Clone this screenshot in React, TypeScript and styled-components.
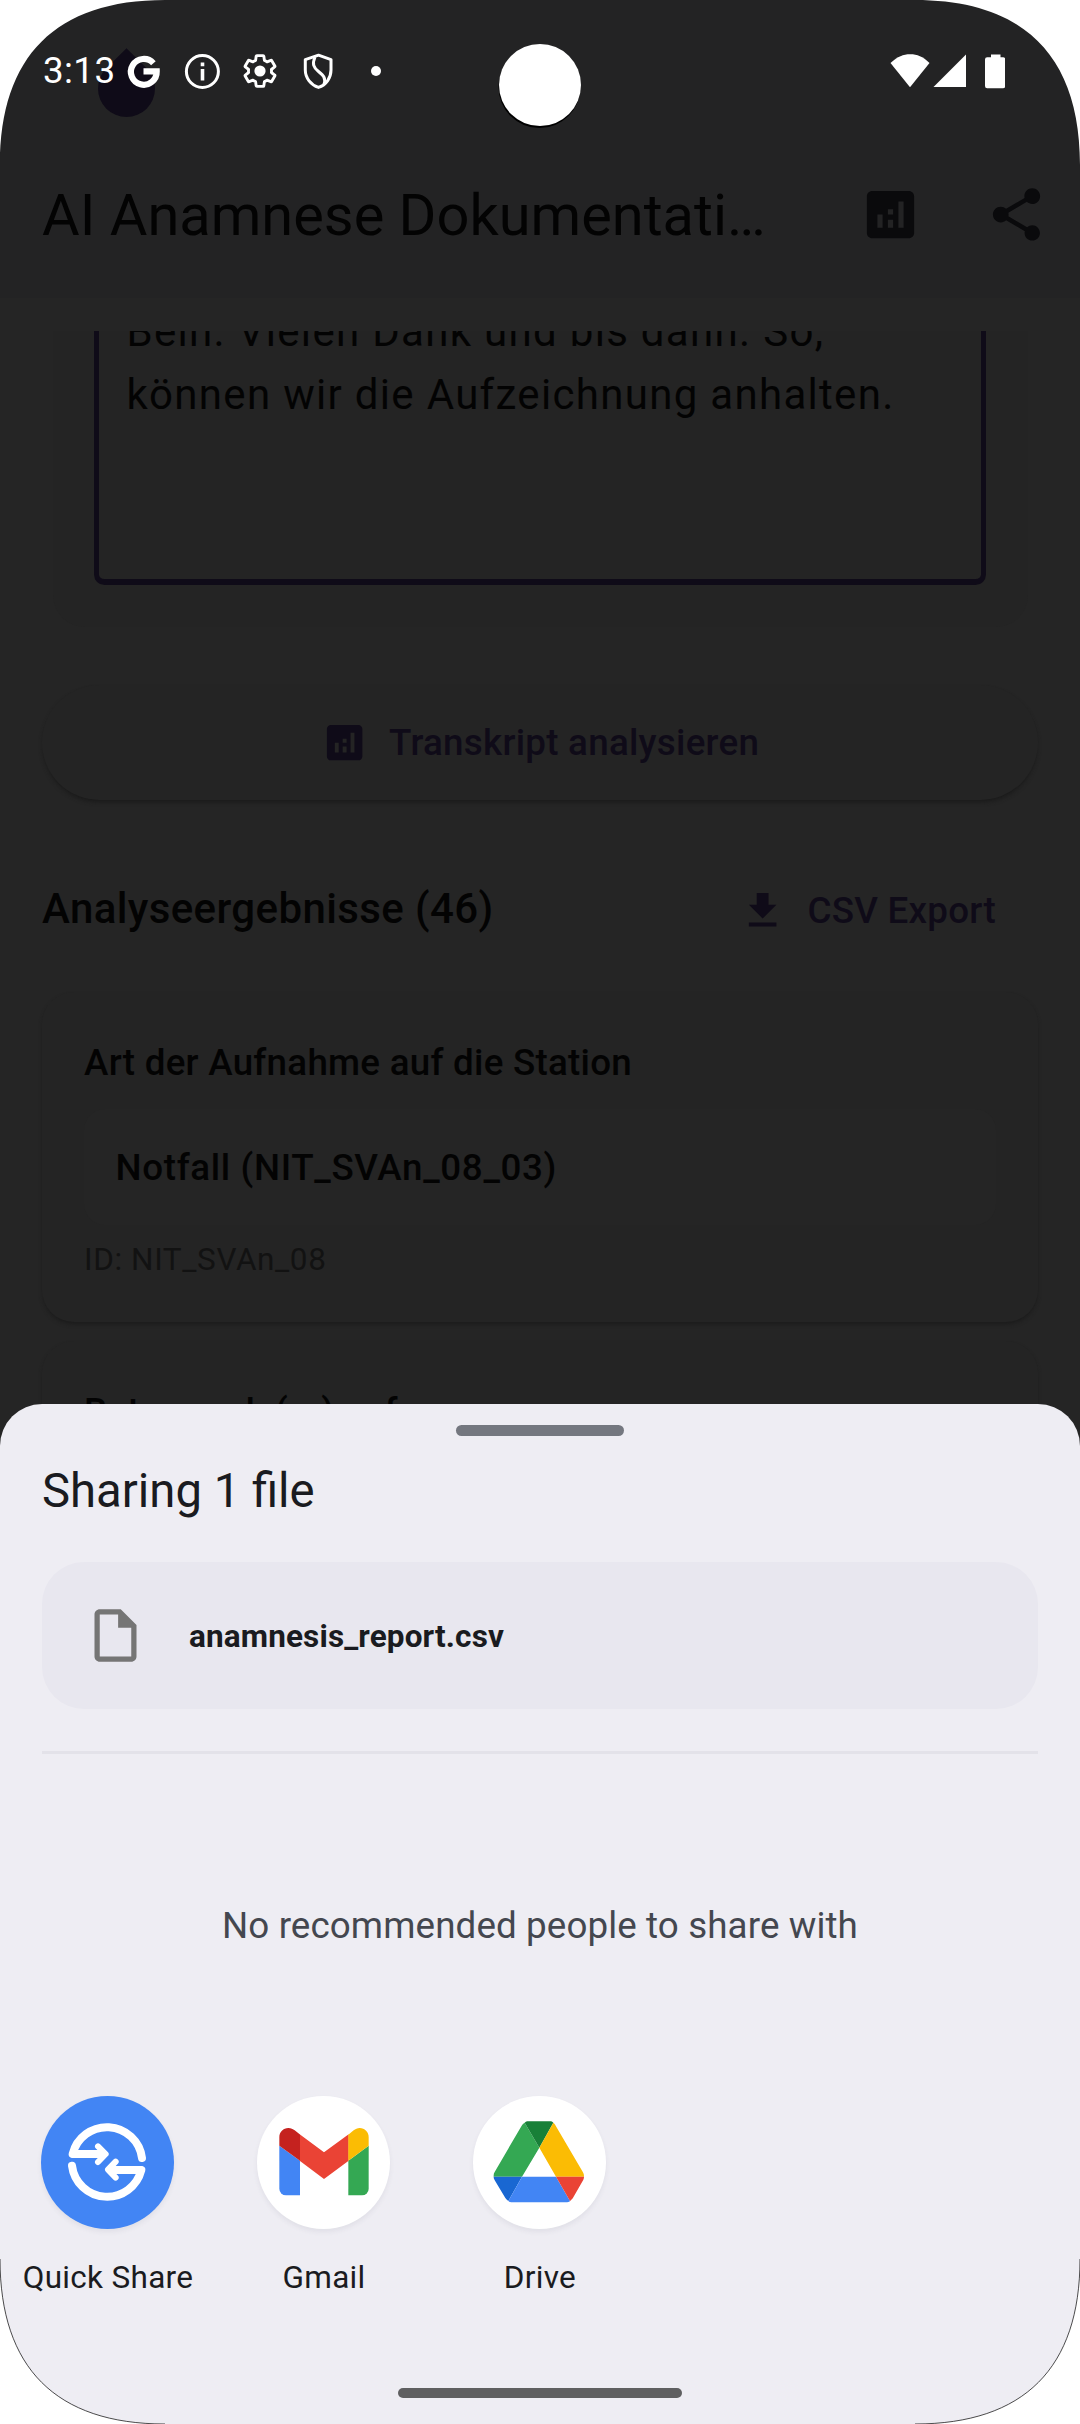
import React from "react";
import styled, { createGlobalStyle } from "styled-components";

const GlobalStyle = createGlobalStyle`
  * { box-sizing: border-box; }
  body { margin: 0; background: #ffffff; font-family: Roboto, "Noto Sans", sans-serif; }
`;

/* ---------- device ---------- */

const Device = styled.div`
  position: relative;
  width: 1080px;
  height: 2424px;
  overflow: hidden;
  background: #252525;
  color: #030303;
`;

const CornerMask = styled.svg`
  position: absolute;
  inset: 0;
  z-index: 5;
  pointer-events: none;
`;

const CameraHole = styled.div`
  position: absolute;
  z-index: 4;
  top: 44px;
  left: 499px;
  width: 82px;
  height: 82px;
  border-radius: 50%;
  background: #ffffff;
  box-shadow: -0.5px 2px 0 0 #000000;
`;

const DragHandle = styled.div`
  position: absolute;
  top: 60px;
  left: 98px;
  width: 57px;
  height: 57px;
  border-radius: 0 50% 50% 50%;
  transform: rotate(45deg);
  background: #0f0b18;
`;

/* ---------- app behind the scrim ---------- */

const AppBar = styled.header`
  height: 298px;
  background: #232324;
`;

const StatusBar = styled.div`
  position: relative;
  z-index: 1;
  display: flex;
  align-items: center;
  justify-content: space-between;
  height: 130px;
  padding: 12px 75px 0 43px;
  color: #ffffff;
`;

const StatusGroup = styled.div<{ $gap: number }>`
  display: flex;
  align-items: center;
  gap: ${(p) => p.$gap}px;
`;

const Clock = styled.span`
  width: 81px;
  font-size: 36.75px;
  line-height: 44px;
  letter-spacing: 0.4px;
`;

const Toolbar = styled.div`
  display: flex;
  align-items: center;
  height: 168px;
  padding: 1px 32px 0 42px;
`;

const AppTitle = styled.h1`
  flex: 1;
  margin: 0;
  font-size: 57.75px;
  font-weight: 400;
  line-height: 74px;
  white-space: nowrap;
`;

const ToolbarActions = styled.div`
  display: flex;
  gap: 63px;
  color: #0a0a0c;
`;

const Icon = styled.svg<{ $size: number }>`
  display: block;
  flex: none;
  width: ${(p) => p.$size}px;
  height: ${(p) => p.$size}px;
  fill: currentColor;
`;

const Content = styled.main`
  padding: 33px 42px 0;
`;

const TranscriptCard = styled.section`
  height: 296px;
  margin: 0 10.5px 57.5px;
  padding: 0 42px 0 41.5px;
  border-radius: 0 0 32px 32px;
  background: #242424;
`;

const TranscriptField = styled.div`
  height: 254px;
  overflow: hidden;
  padding-left: 27.5px;
  border: solid #0f0b18;
  border-width: 0 5px 6px;
  border-radius: 0 0 10.5px 10.5px;
`;

const TranscriptText = styled.p`
  margin: -31px 0 0;
  font-size: 42px;
  line-height: 63px;
  letter-spacing: 1.31px;
  white-space: nowrap;
`;

const AnalyzeButton = styled.button`
  display: flex;
  align-items: center;
  justify-content: center;
  gap: 21px;
  width: 100%;
  height: 115.5px;
  margin: 0 0 57.5px;
  padding: 1px 0 0;
  border: 0;
  border-radius: 58px;
  background: #242424;
  box-shadow: 0 3px 4px -1px #1a1a1a;
  color: #0f0b18;
  font: 500 36.75px/52px Roboto, sans-serif;
  letter-spacing: 0.26px;
`;

const ResultsHeader = styled.div`
  display: flex;
  align-items: center;
  justify-content: space-between;
  height: 105px;
  margin-bottom: 29px;
`;

const ResultsTitle = styled.h2`
  margin: 0 0 3px;
  font-size: 42px;
  font-weight: 500;
  line-height: 63px;
  letter-spacing: 0.39px;
`;

const ExportButton = styled.button`
  display: flex;
  align-items: center;
  gap: 21px;
  height: 105px;
  padding: 1px 42px 0 31.5px;
  border: 0;
  background: none;
  color: #0f0b18;
  font: 500 36.75px/52px Roboto, sans-serif;
  letter-spacing: 0.26px;
`;

const ResultCard = styled.article`
  height: 330px;
  margin-bottom: 19px;
  padding: 45px 42px 0;
  border-radius: 32px;
  background: #242424;
  box-shadow: 0 3px 4px -1px #1b1b1b;
`;

const ResultTitle = styled.h3`
  margin: 0 0 20px;
  font-size: 36.75px;
  font-weight: 500;
  line-height: 52.5px;
  letter-spacing: 0.26px;
  white-space: nowrap;
`;

const ResultValue = styled.div`
  height: 116px;
  padding: 1px 31.5px 0;
  border-radius: 21px;
  background: #252525;
  font-size: 36.75px;
  font-weight: 500;
  line-height: 116px;
  letter-spacing: 0.66px;
`;

const ResultId = styled.div`
  margin-top: 14px;
  color: #121212;
  font-size: 31.5px;
  line-height: 42px;
  letter-spacing: 0.6px;
`;

/* ---------- share sheet ---------- */

const ShareSheet = styled.section`
  position: absolute;
  z-index: 3;
  top: 1404px;
  right: 0;
  bottom: 0;
  left: 0;
  display: flex;
  flex-direction: column;
  padding: 21px 0 26px;
  border-radius: 42px 42px 0 0;
  background: #eeedf3;
  color: #1a1b20;
`;

const SheetHandle = styled.div`
  align-self: center;
  width: 168px;
  height: 11px;
  border-radius: 6px;
  background: #74777f;
`;

const SheetTitle = styled.h2`
  margin: 27px 42px 43px;
  font-size: 47.25px;
  font-weight: 400;
  line-height: 56px;
`;

const FileCard = styled.div`
  display: flex;
  align-items: center;
  gap: 42px;
  height: 147px;
  margin: 0 42px;
  padding: 0 42px;
  border-radius: 42px;
  background: #e8e7ef;
`;

const FileName = styled.span`
  padding-top: 2px;
  font-size: 31.5px;
  font-weight: 700;
  line-height: 42px;
  letter-spacing: 0.13px;
`;

const Divider = styled.hr`
  width: 996px;
  height: 3px;
  margin: 42px 42px 0;
  border: 0;
  background: #e3e2e9;
`;

const EmptyPeople = styled.p`
  margin: 150px 0 148px;
  color: #44474f;
  font-size: 36.75px;
  line-height: 44px;
  letter-spacing: 0.11px;
  text-align: center;
`;

const AppGrid = styled.div`
  display: grid;
  grid-template-columns: repeat(5, 216px);
`;

const AppTarget = styled.div`
  display: flex;
  flex-direction: column;
  align-items: center;
  gap: 30px;
  font-size: 31.5px;
  line-height: 38px;
  letter-spacing: 0.3px;
  white-space: nowrap;
`;

const AppIcon = styled.svg<{ $bg: string }>`
  display: block;
  width: 133px;
  height: 133px;
  margin-right: 1px;
  border-radius: 50%;
  background: ${(p) => p.$bg};
  box-shadow: 0 3px 5px rgba(60, 60, 90, 0.07);
`;

const NavPill = styled.div`
  align-self: center;
  width: 284px;
  height: 10px;
  margin-top: auto;
  border-radius: 5px;
  background: #5f5f60;
`;

/* ---------- icons ---------- */

const AnalyticsIcon = ({ size }: { size: number }) => (
  <Icon $size={size} viewBox="0 0 24 24">
    <path d="M19 3H5c-1.1 0-2 .9-2 2v14c0 1.1.9 2 2 2h14c1.1 0 2-.9 2-2V5c0-1.1-.9-2-2-2zM9 17H7v-5h2v5zm4 0h-2v-3h2v3zm0-5h-2v-2h2v2zm4 5h-2V7h2v10z" />
  </Icon>
);

const ShareIcon = () => (
  <Icon $size={63} viewBox="0 0 24 24">
    <path d="M18 16.08c-.76 0-1.44.3-1.96.77L8.91 12.7c.05-.23.09-.46.09-.7s-.04-.47-.09-.7l7.05-4.11c.54.5 1.25.81 2.04.81 1.66 0 3-1.34 3-3s-1.34-3-3-3-3 1.34-3 3c0 .24.04.47.09.7L8.04 9.81C7.5 9.31 6.79 9 6 9c-1.66 0-3 1.34-3 3s1.34 3 3 3c.79 0 1.5-.31 2.04-.81l7.12 4.16c-.05.21-.08.43-.08.65 0 1.61 1.31 2.92 2.92 2.92s2.92-1.31 2.92-2.92-1.31-2.92-2.92-2.92z" />
  </Icon>
);

const DownloadIcon = () => (
  <Icon $size={47.25} viewBox="0 0 24 24">
    <path d="M19 9h-4V3H9v6H5l7 7 7-7zM5 18v2h14v-2H5z" />
  </Icon>
);

const FileIcon = () => (
  <Icon $size={63} viewBox="0 0 24 24" color="#757575">
    <path d="M14 2H6c-1.1 0-2 .9-2 2v16c0 1.1.9 2 2 2h12c1.1 0 2-.9 2-2V8l-6-6zM6 20V4h7v5h5v11H6z" />
  </Icon>
);

const GEAR =
  "M19.14 12.94c.04-.3.06-.61.06-.94 0-.32-.02-.64-.07-.94l2.03-1.58c.18-.14.23-.41.12-.61l-1.92-3.32c-.12-.22-.37-.29-.59-.22l-2.39.96c-.5-.38-1.03-.7-1.62-.94l-.36-2.54c-.04-.24-.24-.41-.48-.41h-3.84c-.24 0-.43.17-.47.41l-.36 2.54c-.59.24-1.13.57-1.62.94l-2.39-.96c-.22-.08-.47 0-.59.22L2.74 8.87c-.12.21-.08.47.12.61l2.03 1.58c-.05.3-.09.63-.09.94s.02.64.07.94l-2.03 1.58c-.18.14-.23.41-.12.61l1.92 3.32c.12.22.37.29.59.22l2.39-.96c.5.38 1.03.7 1.62.94l.36 2.54c.05.24.24.41.48.41h3.84c.24 0 .44-.17.47-.41l.36-2.54c.59-.24 1.13-.56 1.62-.94l2.39.96c.22.08.47 0 .59-.22l1.92-3.32c.12-.22.07-.47-.12-.61l-2.01-1.58z";

const NotificationIcons = () => (
  <StatusGroup $gap={18}>
    <Icon $size={40} viewBox="0 0 40 40">
      <path
        d="M29.4 12.2A12.9 12.9 0 1 0 32.7 20.4H19.5"
        fill="none"
        stroke="#fff"
        strokeWidth="6.2"
      />
    </Icon>
    <Icon $size={40} viewBox="0 0 40 40">
      <circle cx="20.4" cy="20.5" r="16" fill="none" stroke="#fff" strokeWidth="3" />
      <path d="M18.7 11.5h3.6v3.8h-3.6zM18.7 18h3.6v11.4h-3.6z" />
    </Icon>
    <Icon $size={40} viewBox="-0.5 -0.5 25 25">
      <path d={GEAR} fill="none" stroke="#fff" strokeWidth="1.8" strokeLinejoin="round" />
      <circle cx="12" cy="12" r="3.5" />
    </Icon>
    <Icon $size={40} viewBox="0 0 40 40">
      <g fill="none" stroke="#fff" strokeWidth="3" strokeLinejoin="round">
        <path d="M20.5 4.2 33 8.6V19c0 8-5 15-12.5 17.4C13 34 7.3 27 7.3 19V8.6z" />
        <path d="M17 6c-3 7-1.5 10.5 3.5 14.5s7.5 6.5 5.5 13" />
      </g>
    </Icon>
    <Icon $size={40} viewBox="0 0 40 40">
      <circle cx="20" cy="20" r="5" />
    </Icon>
  </StatusGroup>
);

const SystemIcons = () => (
  <Icon $size={116} viewBox="0 0 116 116">
    <path d="M1.5 50C9 43.5 14 41.300 21.200 41.300S33.500 43.500 40.500 50L21 74.300z" />
    <path d="M77 41.5V74H44.5z" />
    <path d="M102 41.5h9.5v2.7h2.5q2.2 0 2.2 2.2v26.6q0 2.200-2.200 2.200H98.200q-2.200 0-2.200-2.200V46.400q0-2.200 2.200-2.200h3.800z" />
  </Icon>
);

const QuickShareIcon = () => (
  <AppIcon $bg="#4285f4" viewBox="123 48 399 399">
    <g fill="none" stroke="#fff" strokeLinecap="round" strokeLinejoin="round">
      <path strokeWidth="24" d="M426 234A106 106 0 0 0 218 222H308" />
      <path strokeWidth="24" d="M216 257A106 106 0 0 0 424 270H332" />
      <path strokeWidth="18" d="M294 199 317 222 294 246M347 245 324 269 347 293" />
    </g>
  </AppIcon>
);

const GmailIcon = () => (
  <AppIcon $bg="#ffffff" viewBox="111 48 399 399">
    <path fill="#4285f4" d="M178 197 240 242V346H198a20 20 0 0 1-20-20z" />
    <path fill="#34a853" d="M446 197V326a20 20 0 0 1-20 20H385V242z" />
    <path fill="#ea4335" d="M239 163 312 217 386 163V242L312 297 239 242z" />
    <path fill="#c5221f" d="M178 197V171c0-15 12-27 27-27 8 0 14 3 19 7L240 163.500V242z" />
    <path fill="#fbbc04" d="M385 164 401 151c5-4 11-7 18-7 15 0 27 12 27 27v26L385 242z" />
  </AppIcon>
);

const DriveIcon = () => (
  <AppIcon $bg="#ffffff" viewBox="759 48 399 399">
    <path fill="#34a853" d="M914 128 958 203 906 290H821v-4c0-4 1-7 3-10L905 137c2-4 5-7 9-9z" />
    <path fill="#188038" d="M914 128c3-3 7-4 11-4H990c4 0 7 1 10 4L958 203z" />
    <path fill="#fbbc04" d="M1000 128c4 3 5 5 7 9L1088 275c3 5 4 8 4 15H1008L958 203z" />
    <path fill="#1967d2" d="M821 290H906L865 363c-3-2-6-5-9-9L825 302c-3-5-4-8-4-12z" />
    <path fill="#4285f4" d="M906 290H1008L1050 363c-3 3-7 4-12 4H877c-5 0-9-1-12-4z" />
    <path fill="#ea4335" d="M1008 290H1092c0 4-1 8-4 13L1060 352c-3 5-6 8-10 11z" />
  </AppIcon>
);

/* ---------- screen ---------- */

export default function App() {
  return (
    <>
      <GlobalStyle />
      <Device>
        <AppBar>
          <DragHandle />
          <StatusBar>
            <StatusGroup $gap={-2}>
              <Clock>3:13</Clock>
              <NotificationIcons />
            </StatusGroup>
            <SystemIcons />
          </StatusBar>
          <Toolbar>
            <AppTitle>AI Anamnese Dokumentati…</AppTitle>
            <ToolbarActions>
              <AnalyticsIcon size={63} />
              <ShareIcon />
            </ToolbarActions>
          </Toolbar>
        </AppBar>

        <Content>
          <TranscriptCard>
            <TranscriptField>
              <TranscriptText>
                Bein. Vielen Dank und bis dann. So,
                <br />
                können wir die Aufzeichnung anhalten.
              </TranscriptText>
            </TranscriptField>
          </TranscriptCard>

          <AnalyzeButton>
            <AnalyticsIcon size={47.25} />
            Transkript analysieren
          </AnalyzeButton>

          <ResultsHeader>
            <ResultsTitle>Analyseergebnisse (46)</ResultsTitle>
            <ExportButton>
              <DownloadIcon />
              CSV Export
            </ExportButton>
          </ResultsHeader>

          <ResultCard>
            <ResultTitle>Art der Aufnahme auf die Station</ResultTitle>
            <ResultValue>Notfall (NIT_SVAn_08_03)</ResultValue>
            <ResultId>ID: NIT_SVAn_08</ResultId>
          </ResultCard>
          <ResultCard>
            <ResultTitle>Betreuende(er) auf</ResultTitle>
          </ResultCard>
        </Content>

        <ShareSheet>
          <SheetHandle />
          <SheetTitle>Sharing 1 file</SheetTitle>
          <FileCard>
            <FileIcon />
            <FileName>anamnesis_report.csv</FileName>
          </FileCard>
          <Divider />
          <EmptyPeople>No recommended people to share with</EmptyPeople>
          <AppGrid>
            <AppTarget>
              <QuickShareIcon />
              Quick Share
            </AppTarget>
            <AppTarget>
              <GmailIcon />
              Gmail
            </AppTarget>
            <AppTarget>
              <DriveIcon />
              Drive
            </AppTarget>
          </AppGrid>
          <NavPill />
        </ShareSheet>

        <CameraHole />
        <CornerMask width="1080" height="2424" viewBox="0 0 1080 2424">
          <g fill="#ffffff">
            <path d="M0 0H165C56 0 0 56 0 165z" />
            <path d="M1080 0H915C1024 0 1080 56 1080 165z" />
            <path d="M0 2424H165C56 2424 0 2368 0 2259z" />
            <path d="M1080 2424H915C1024 2424 1080 2368 1080 2259z" />
          </g>
          <path
            d="M165 2424C56 2424 0 2368 0 2259M915 2424C1024 2424 1080 2368 1080 2259"
            fill="none"
            stroke="#000000"
            strokeWidth="0.7"
          />
        </CornerMask>
      </Device>
    </>
  );
}
